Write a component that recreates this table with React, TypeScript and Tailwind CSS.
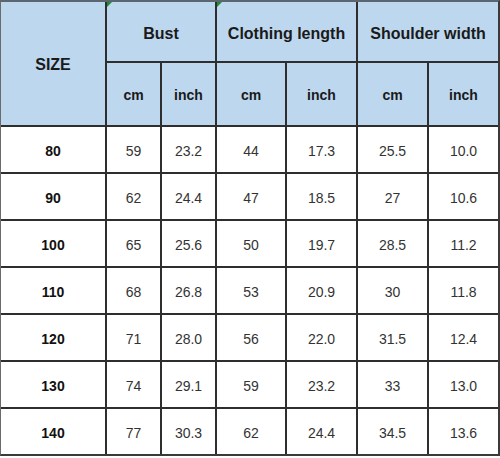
import React from "react";

const rows = [
  ["80", "59", "23.2", "44", "17.3", "25.5", "10.0"],
  ["90", "62", "24.4", "47", "18.5", "27", "10.6"],
  ["100", "65", "25.6", "50", "19.7", "28.5", "11.2"],
  ["110", "68", "26.8", "53", "20.9", "30", "11.8"],
  ["120", "71", "28.0", "56", "22.0", "31.5", "12.4"],
  ["130", "74", "29.1", "59", "23.2", "33", "13.0"],
  ["140", "77", "30.3", "62", "24.4", "34.5", "13.6"],
];

const font = { fontFamily: '"Liberation Sans", Arial, sans-serif' };

export default function App() {
  return (
    <div className="w-[500px] h-[458px] bg-white" style={font}>
      <div className="grid grid-cols-[104px_53px_53px_68px_69px_69px_69px] grid-rows-[59px_62px_repeat(7,45px)] gap-[2px] bg-[#2e2e2e] border-t-2 border-l border-r-2 border-b-2 border-t-[#5c6670] border-l-[#6b6b6b] border-r-[#3a3a3a] border-b-[#3a3a3a] w-[500px]">
        <div className="row-span-2 bg-[#bdd7ee] flex items-center justify-center pt-[3px] text-[16px] font-bold text-[#1a1a1a]">
          SIZE
        </div>
        <div className="col-span-2 bg-[#bdd7ee] flex items-center justify-center pt-[4px] text-[16px] font-bold text-[#1a1a1a] relative">
          <span className="absolute left-0 top-0 w-0 h-0 border-t-[5px] border-r-[5px] border-t-[#1f8a2e] border-r-transparent" />
          Bust
        </div>
        <div className="col-span-2 bg-[#bdd7ee] flex items-center justify-center pt-[4px] text-[16px] font-bold text-[#1a1a1a] relative">
          <span className="absolute left-0 top-0 w-0 h-0 border-t-[5px] border-r-[5px] border-t-[#1f8a2e] border-r-transparent" />
          Clothing length
        </div>
        <div className="col-span-2 bg-[#bdd7ee] flex items-center justify-center pt-[4px] text-[16px] font-bold text-[#1a1a1a]">
          Shoulder width
        </div>
        {["cm", "inch", "cm", "inch", "cm", "inch"].map((t, i) => (
          <div
            key={i}
            className="bg-[#bdd7ee] flex items-center justify-center pt-[3px] text-[14px] font-bold text-[#1a1a1a]"
          >
            {t}
          </div>
        ))}
        {rows.map((r, ri) =>
          r.map((c, ci) => (
            <div
              key={`${ri}-${ci}`}
              className={
                ci === 0
                  ? "bg-white flex items-center justify-center pt-[3px] text-[14px] font-bold text-[#111111]"
                  : "bg-white flex items-center justify-center pt-[3px] text-[14px] text-[#333333]"
              }
            >
              {c}
            </div>
          ))
        )}
      </div>
    </div>
  );
}
